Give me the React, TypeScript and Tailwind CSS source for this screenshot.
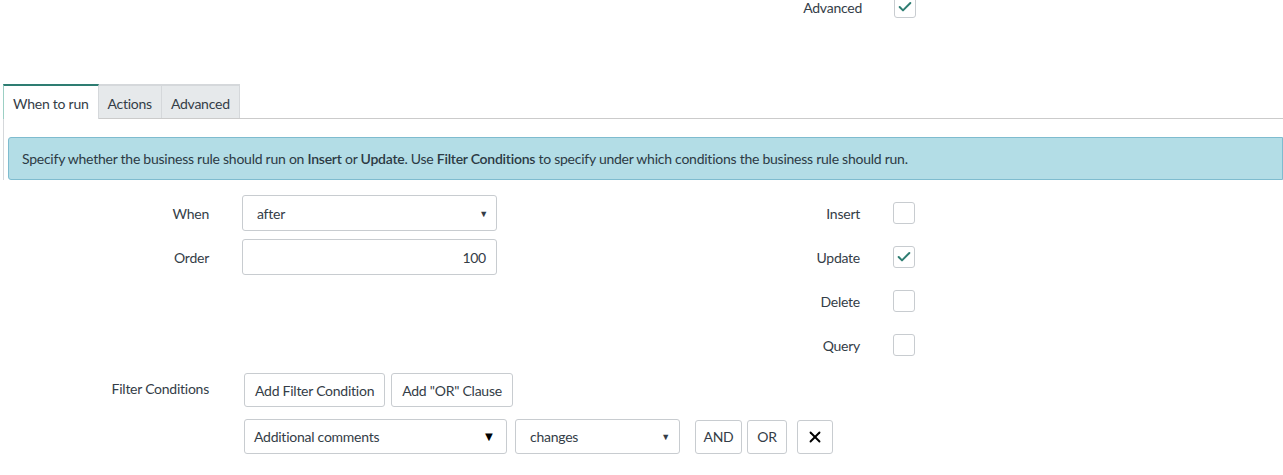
import { Check, X } from 'lucide-react'

const FONT = { fontFamily: 'Lato, "Liberation Sans", sans-serif' }

function Checkbox({ checked }: { checked?: boolean }) {
  return (
    <div className="w-[22px] h-[22px] rounded-[3px] border border-[#c8ccd0] bg-white flex items-center justify-center">
      {checked && <Check className="w-[16px] h-[16px] text-[#2e7d72]" strokeWidth={3} />}
    </div>
  )
}

function Caret({ dark }: { dark?: boolean }) {
  return dark ? (
    <span className="text-[13px] text-black leading-none">▼</span>
  ) : (
    <span className="text-[9px] text-[#343d47] leading-none">▼</span>
  )
}

function Row({
  label,
  field,
  right,
  checked,
}: {
  label?: string
  field?: React.ReactNode
  right: string
  checked?: boolean
}) {
  return (
    <div className="flex items-center h-[44px]">
      <div className="w-[209px] text-right">{label}</div>
      <div className="w-[255px] ml-[33px]">{field}</div>
      <div className="w-[363px] text-right">{right}</div>
      <div className="ml-[33px]">
        <Checkbox checked={checked} />
      </div>
    </div>
  )
}

export default function App() {
  return (
    <div
      className="w-[1283px] h-[475px] bg-white text-[14px] tracking-[-0.25px] text-[#343d47] overflow-hidden"
      style={FONT}
    >
      {/* top field */}
      <div className="flex h-[84px] items-start">
        <div className="flex items-center -mt-[4px]">
          <div className="w-[862px] text-right">Advanced</div>
          <div className="ml-[32px]">
            <Checkbox checked />
          </div>
        </div>
      </div>

      {/* tabs */}
      <div className="flex items-end pl-[3px]">
        <div className="h-[35px] px-[9px] pt-[2px] flex items-center bg-white border-t-2 border-t-[#2e7d72] border-l border-l-[#9ccfc4] border-r border-r-[#d5d8db]">
          When to run
        </div>
        <div className="flex flex-1 flex-col">
          <div className="flex">
            <div className="h-[34px] px-[9px] pt-[2px] flex items-center bg-[#e6e9eb] border-t-2 border-t-[#d5d8db] border-r border-r-[#d5d8db]">
              Actions
            </div>
            <div className="h-[34px] px-[9px] pt-[2px] flex items-center bg-[#e6e9eb] border-t-2 border-t-[#d5d8db] border-r border-r-[#d5d8db]">
              Advanced
            </div>
          </div>
          <div className="h-px bg-[#cbcbcb]" />
        </div>
      </div>

      {/* panel */}
      <div className="ml-[3px] border-l border-[#d5d8db] pl-[4px] pt-[18px]">
        <div className="h-[43px] bg-[#b3dde6] border border-[#7fbccf] rounded-l-[3px] flex items-center pl-[13px] text-[14px] text-[#2c3a44]">
          <span>
            Specify whether the business rule should run on <b className="font-semibold">Insert</b> or{' '}
            <b className="font-semibold">Update</b>. Use <b className="font-semibold">Filter Conditions</b> to specify
            under which conditions the business rule should run.
          </span>
        </div>
      </div>

      <div className="pt-[11px]">
        <Row
          label="When"
          right="Insert"
          field={
            <div className="h-[36px] border border-[#c8ccd0] rounded-[3px] flex items-center justify-between pl-[14px] pr-[8px]">
              <span>after</span>
              <Caret />
            </div>
          }
        />
        <Row
          label="Order"
          right="Update"
          checked
          field={
            <div className="h-[36px] border border-[#c8ccd0] rounded-[3px] flex items-center justify-end pr-[10px]">
              100
            </div>
          }
        />
        <Row right="Delete" />
        <Row right="Query" />

        {/* filter conditions */}
        <div className="flex items-center mt-[6px] h-[34px]">
          <div className="w-[209px] text-right -mt-[4px]">Filter Conditions</div>
          <div className="ml-[35px] flex gap-[6px]">
            <button className="h-[34px] px-[10px] border border-[#c8ccd0] rounded-[3px] bg-white">Add Filter Condition</button>
            <button className="h-[34px] px-[10px] border border-[#c8ccd0] rounded-[3px] bg-white">Add "OR" Clause</button>
          </div>
        </div>
        <div className="flex items-center mt-[12px] pl-[244px]">
          <div className="w-[263px] h-[35px] border border-[#c8ccd0] rounded-[3px] flex items-center justify-between pl-[9px] pr-[11px]">
            <span>Additional comments</span>
            <Caret dark />
          </div>
          <div className="ml-[8px] w-[165px] h-[35px] border border-[#c8ccd0] rounded-[3px] flex items-center justify-between pl-[14px] pr-[9px]">
            <span>changes</span>
            <Caret />
          </div>
          <button className="ml-[15px] w-[47px] h-[34px] border border-[#c8ccd0] rounded-[3px] bg-white">AND</button>
          <button className="ml-[5px] w-[40px] h-[34px] border border-[#c8ccd0] rounded-[3px] bg-white">OR</button>
          <button className="ml-[10px] w-[36px] h-[34px] border border-[#c8ccd0] rounded-[3px] bg-white flex items-center justify-center">
            <X className="w-[18px] h-[18px] text-black" strokeWidth={2.5} />
          </button>
        </div>
      </div>
    </div>
  )
}
